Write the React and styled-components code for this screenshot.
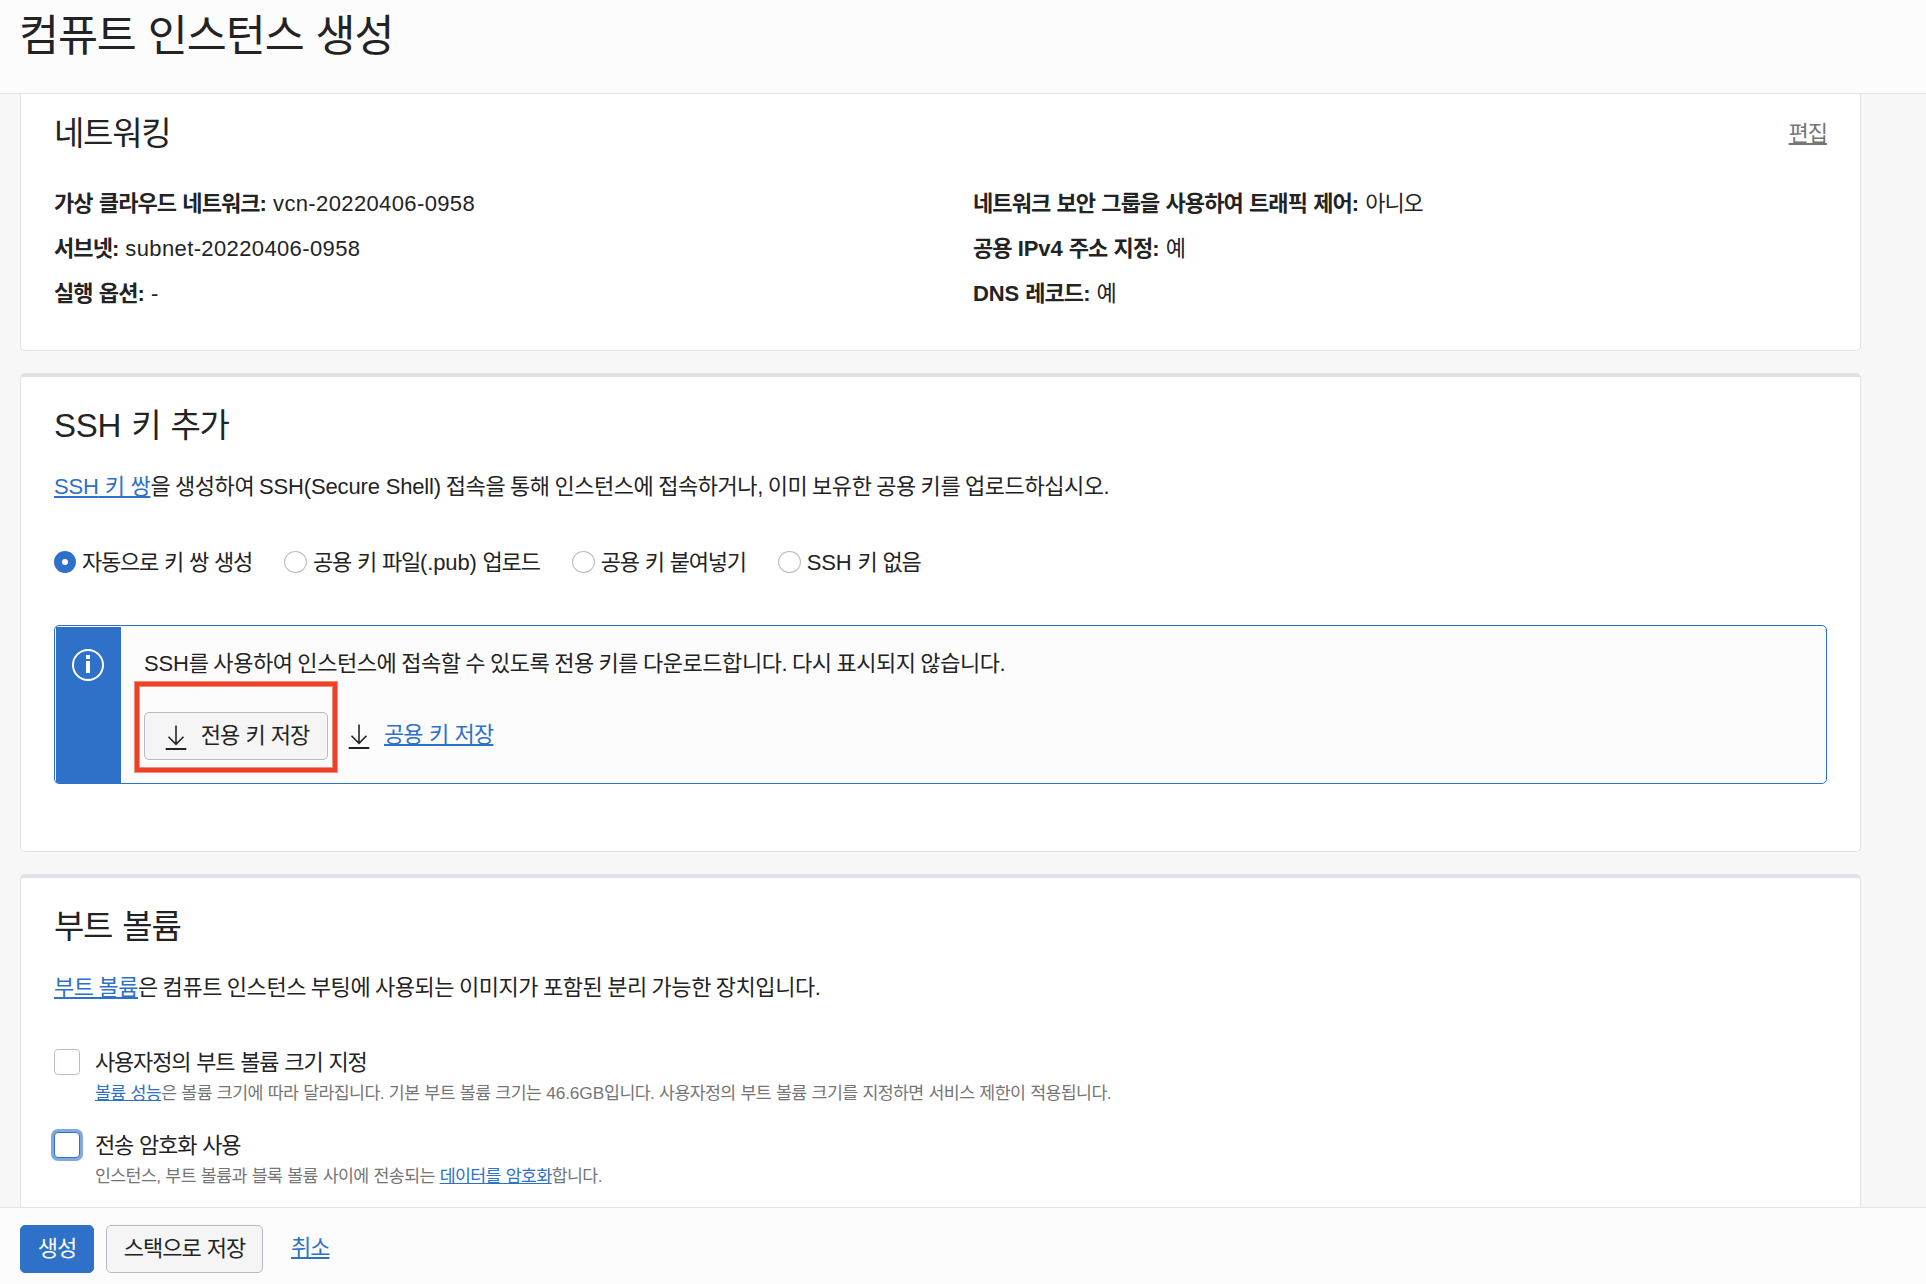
import React from "react";
import styled, { createGlobalStyle } from "styled-components";

const BLUE = "#2f70c8";
const INK = "#232323";

const GlobalStyle = createGlobalStyle`
  *, *::before, *::after { box-sizing: border-box; }
  body {
    margin: 0;
    background: #f7f7f7;
    color: ${INK};
    font-family: "Liberation Sans", "Noto Sans CJK KR", sans-serif;
    font-size: 22px;
    line-height: 30px;
  }
  h1, h2, p, dl, dt, dd { margin: 0; }
`;

const Page = styled.div`
  display: flex;
  flex-direction: column;
  height: 1284px;
  overflow: hidden;
  white-space: nowrap;
  letter-spacing: -0.047em;
  word-spacing: 0.047em;
`;

const Header = styled.header`
  flex: none;
  height: 94px;
  padding: 7px 19px 0;
  background: #fcfcfc;
  border-bottom: 1px solid #e4e4e5;
`;

const Title = styled.h1`
  font-size: 43.5px;
  font-weight: 400;
  line-height: 58px;
  letter-spacing: -0.025em;
`;

const Main = styled.main`
  flex: 1;
  min-height: 0;
  overflow: hidden;
  padding-right: 65px;
  padding-left: 20px;
`;

const Card = styled.section`
  height: ${(p) => p.$height}px;
  margin-bottom: 22px;
  padding: ${(p) => (p.$clipped ? "16px" : "25px")} 33px 0;
  background: #fff;
  border: 1px solid #e2e3e6;
  border-top: ${(p) => (p.$clipped ? "0" : "4px solid #e1e2e7")};
  border-radius: ${(p) => (p.$clipped ? "0 0 5px 5px" : "5px")};
`;

const CardHead = styled.div`
  display: flex;
  justify-content: space-between;
  height: 48px;
`;

const Heading = styled.h2`
  font-size: 33px;
  font-weight: 400;
  line-height: 48px;
  letter-spacing: -0.038em;
  word-spacing: 0.065em;
`;

const Latin = styled.span`
  letter-spacing: ${(p) => (p.$wide ? "0.017em" : "-0.007em")};
  word-spacing: 0;
`;

const Link = styled.a`
  color: ${(p) => (p.$muted ? "#757575" : BLUE)};
  text-decoration: underline;
  text-decoration-thickness: ${(p) => (p.$thin ? 1 : 2)}px;
  text-underline-offset: ${(p) => (p.$thin ? 1 : 2)}px;
  text-decoration-skip-ink: none;
`;

const LeadLink = styled(Link)`
  word-spacing: 0.015em;
`;

const EditLink = styled(Link)`
  line-height: 48px;
`;

const Details = styled.dl`
  display: grid;
  grid-template-columns: 919px 1fr;
  margin-top: 23px;
  line-height: 45px;
`;

const Detail = styled.div`
  display: flex;
  gap: 7px;
`;

const Term = styled.dt`
  font-weight: 700;
  letter-spacing: -0.042em;
`;

const Value = styled.dd``;

const Prose = styled.p`
  letter-spacing: -0.02em;
  word-spacing: -0.04em;
`;

const Intro = styled(Prose)`
  margin-top: 22px;
`;

const RadioGroup = styled.div`
  display: flex;
  gap: 32px;
  margin-top: 46px;
  letter-spacing: -0.055em;
`;

const Radio = styled.label`
  display: flex;
  align-items: flex-start;
  gap: 6px;
`;

const RadioMark = styled.span`
  width: ${(p) => (p.$checked ? 22 : 23)}px;
  height: 22px;
  margin-top: 3px;
  border: ${(p) => (p.$checked ? `8px solid ${BLUE}` : "1px solid #b9bcc5")};
  border-radius: 50%;
  background: #fff;
`;

const Notice = styled.div`
  display: flex;
  height: 159px;
  margin-top: 47px;
  background: #fcfcfc;
  border: 1px solid ${BLUE};
  border-radius: 5px;
  overflow: hidden;
`;

const NoticeSide = styled.div`
  flex: none;
  width: 65px;
  margin: 1px 0 0 1px;
  padding: 22px 0 0 16px;
  background: ${BLUE};
`;

const NoticeBody = styled.div`
  padding: 23px 0 0 23px;
`;

const Actions = styled.div`
  display: flex;
  gap: 20px;
  margin-top: 33px;
`;

const Marked = styled.span`
  position: relative;
  display: flex;

  &::after {
    content: "";
    position: absolute;
    inset: -30px -9px -12px -9px;
    border: 4px solid #ec4127;
    box-shadow: 0 0 0 1px #ec412799, inset 0 0 0 1px #ec412799;
  }
`;

const Button = styled.button`
  display: flex;
  align-items: center;
  justify-content: center;
  width: ${(p) => p.$width}px;
  height: 48px;
  padding: 0;
  border: 1px solid ${(p) => (p.$primary ? BLUE : "#b7bac2")};
  border-radius: 5px;
  background: ${(p) => (p.$primary ? BLUE : "#f5f5f5")};
  color: ${(p) => (p.$primary ? "#fff" : INK)};
  font: inherit;
  letter-spacing: inherit;
  word-spacing: inherit;
`;

const IconButtonContent = styled.span`
  display: flex;
  gap: 14px;
  padding-left: 2px;
`;

const DownloadLink = styled.span`
  display: flex;
  gap: 14px;
  padding-top: 8px;
  letter-spacing: -0.04em;
`;

const Glyph = styled.svg`
  display: block;
  flex: none;
`;

const Options = styled.div`
  display: grid;
  gap: 23px;
  margin-top: 45px;
`;

const Option = styled.div`
  display: flex;
  gap: 15px;
  height: 60px;
`;

const OptionLabel = styled.p`
  height: 31px;
  letter-spacing: -0.054em;
`;

const CheckMark = styled.span`
  flex: none;
  width: 26px;
  height: 26px;
  margin-top: 1px;
  border: ${(p) => (p.$focused ? `1.5px solid ${BLUE}` : "1px solid #b9bcc5")};
  border-radius: 4px;
  background: #fff;
  box-shadow: ${(p) => (p.$focused ? "0 0 0 3px #82a9de" : "none")};
`;

const Hint = styled.p`
  color: #757575;
  font-size: 17.3px;
  line-height: 28px;
  letter-spacing: -0.034em;
  word-spacing: 0.039em;
`;

const Footer = styled.footer`
  display: flex;
  flex: none;
  align-items: flex-start;
  height: 77px;
  padding: 17px 20px 0;
  background: #fcfcfc;
  border-top: 1px solid #e4e4e5;
`;

const Spacer = styled.span`
  width: ${(p) => p.$width}px;
`;

const CancelLink = styled(Link)`
  line-height: 46px;
`;

const DownloadGlyph = () => (
  <Glyph width="22" height="30" viewBox="0 0 22 30" fill="none" stroke={INK}>
    <path d="M11 4.500v18.500M3.500 15.800 11 23.300l7.500-7.500" strokeWidth="1.600" />
    <path d="M.7 28h20.600" strokeWidth="1.900" />
  </Glyph>
);

const InfoGlyph = () => (
  <Glyph width="32" height="32" viewBox="0 0 32 32">
    <circle cx="16" cy="16" r="15" fill="none" stroke="#fff" strokeWidth="2" />
    <path d="M14 6h4v4h-4zM14 12h4v12h-4z" fill="#fff" />
  </Glyph>
);

const details = [
  ["가상 클라우드 네트워크:", <Latin $wide>vcn-20220406-0958</Latin>],
  ["네트워크 보안 그룹을 사용하여 트래픽 제어:", "아니오"],
  ["서브넷:", <Latin $wide>subnet-20220406-0958</Latin>],
  [<>공용 <Latin>IPv4</Latin> 주소 지정:</>, "예"],
  ["실행 옵션:", "-"],
  [<><Latin>DNS</Latin> 레코드:</>, "예"],
];

const keyModes = [
  "자동으로 키 쌍 생성",
  <>공용 키 파일<Latin>(.pub)</Latin> 업로드</>,
  "공용 키 붙여넣기",
  <><Latin>SSH</Latin> 키 없음</>,
];

export default function App() {
  return (
    <Page>
      <GlobalStyle />
      <Header>
        <Title>컴퓨트 인스턴스 생성</Title>
      </Header>
      <Main>
        <Card $height={257} $clipped>
          <CardHead>
            <Heading>네트워킹</Heading>
            <EditLink $muted>편집</EditLink>
          </CardHead>
          <Details>
            {details.map(([term, value], i) => (
              <Detail key={i}>
                <Term>{term}</Term>
                <Value>{value}</Value>
              </Detail>
            ))}
          </Details>
        </Card>

        <Card $height={479}>
          <CardHead>
            <Heading><Latin>SSH</Latin> 키 추가</Heading>
          </CardHead>
          <Intro>
            <LeadLink><Latin>SSH</Latin> 키 쌍</LeadLink>을 생성하여 <Latin>SSH(Secure Shell)</Latin> 접속을 통해 인스턴스에 접속하거나, 이미 보유한 공용 키를 업로드하십시오.
          </Intro>
          <RadioGroup>
            {keyModes.map((label, i) => (
              <Radio key={i}>
                <RadioMark $checked={i === 0} />
                <span>{label}</span>
              </Radio>
            ))}
          </RadioGroup>
          <Notice>
            <NoticeSide>
              <InfoGlyph />
            </NoticeSide>
            <NoticeBody>
              <Prose><Latin>SSH</Latin>를 사용하여 인스턴스에 접속할 수 있도록 전용 키를 다운로드합니다. 다시 표시되지 않습니다.</Prose>
              <Actions>
                <Marked>
                  <Button $width={184}>
                    <IconButtonContent>
                      <DownloadGlyph />
                      <span>전용 키 저장</span>
                    </IconButtonContent>
                  </Button>
                </Marked>
                <DownloadLink>
                  <DownloadGlyph />
                  <Link>공용 키 저장</Link>
                </DownloadLink>
              </Actions>
            </NoticeBody>
          </Notice>
        </Card>

        <Card $height={420}>
          <CardHead>
            <Heading>부트 볼륨</Heading>
          </CardHead>
          <Intro>
            <Link>부트 볼륨</Link>은 컴퓨트 인스턴스 부팅에 사용되는 이미지가 포함된 분리 가능한 장치입니다.
          </Intro>
          <Options>
            <Option>
              <CheckMark />
              <div>
                <OptionLabel>사용자정의 부트 볼륨 크기 지정</OptionLabel>
                <Hint>
                  <Link $thin>볼륨 성능</Link>은 볼륨 크기에 따라 달라집니다. 기본 부트 볼륨 크기는 <Latin>46.6GB</Latin>입니다. 사용자정의 부트 볼륨 크기를 지정하면 서비스 제한이 적용됩니다.
                </Hint>
              </div>
            </Option>
            <Option>
              <CheckMark $focused />
              <div>
                <OptionLabel>전송 암호화 사용</OptionLabel>
                <Hint>
                  인스턴스, 부트 볼륨과 블록 볼륨 사이에 전송되는 <Link $thin>데이터를 암호화</Link>합니다.
                </Hint>
              </div>
            </Option>
          </Options>
        </Card>
      </Main>
      <Footer>
        <Button $width={74} $primary>생성</Button>
        <Spacer $width={12} />
        <Button $width={157}>스택으로 저장</Button>
        <Spacer $width={28} />
        <CancelLink>취소</CancelLink>
      </Footer>
    </Page>
  );
}
